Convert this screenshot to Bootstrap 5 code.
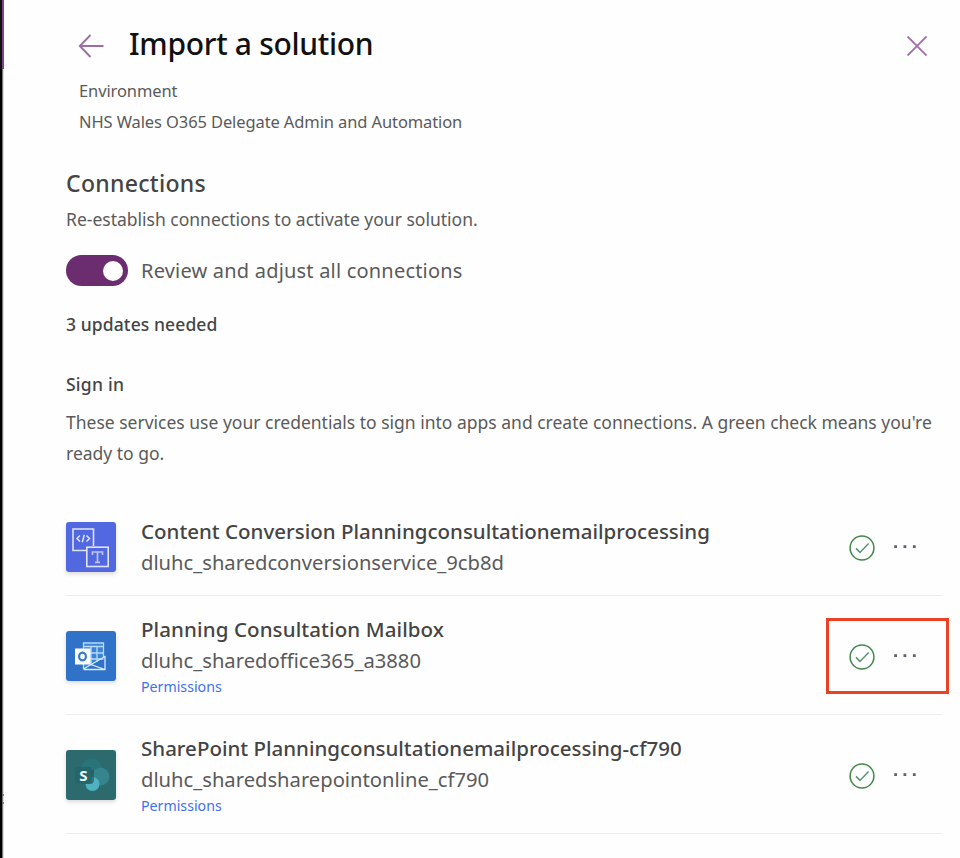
<!DOCTYPE html>
<html lang="en">
<head>
<meta charset="utf-8">
<meta name="viewport" content="width=device-width, initial-scale=1">
<title>Import a solution</title>
<link href="https://cdn.jsdelivr.net/npm/bootstrap@5.3.0/dist/css/bootstrap.min.css" rel="stylesheet">
<style>
body{font-family:"Noto Sans","Open Sans",sans-serif;background:#fefefe;color:#5a5a5a}
.panel-page{height:858px;overflow:hidden}
.edge{width:4px;background:linear-gradient(90deg,#000 0 2px,#777 2px 3px,#ddd 3px)}
.edge-top{height:69px;background:linear-gradient(90deg,#111 0 2px,#7d4585 2px 4px)}
.edge-ticks{margin-bottom:54px}
.edge-tick{width:4px;height:2px;background:linear-gradient(90deg,#000 0 2px,#777 2px)}
.edge-tick + .edge-tick{margin-top:6px}
.pane{padding:24px 18px 0 62px}
.back-icon{margin:4px 25px 0 12px}
.close-icon{margin:4px 15px 0 0}
.ttl{font-size:30px;line-height:40px;font-weight:500;color:#111;letter-spacing:-.3px;height:40px}
.env{padding:11px 0 0 13px;font-size:16.5px;line-height:31px;letter-spacing:-.11px}
.section-title{font-size:23px;line-height:30px;letter-spacing:.3px;margin-top:31px}
.body-text{font-size:17.5px;line-height:31px}
.strong-text{font-weight:500;color:#444}
.intro{margin:6px 0 0}
.toggle-row{margin-top:20px}
.toggle-on{width:62px;height:31px;background:#6c2c70;padding-right:5px}
.knob{width:20px;height:20px}
.toggle-label{margin-left:13px;font-size:20px;line-height:31px;letter-spacing:.2px}
.updates{margin-top:23px;letter-spacing:.1px}
.signin{margin-top:29px;letter-spacing:.25px}
.signin-note{margin:7px 0 0}
.services{margin-top:29px}
.svc{padding:18px 0 17px;border-bottom:1px solid #ededed}
.tile{width:50px;height:50px;border-radius:3px;box-shadow:0 2px 4px rgba(0,0,0,.15);margin-right:25px}
.svc-name{font-size:20.5px;line-height:31px}
.svc-name.spaced{letter-spacing:.11px}
.svc-id{font-size:20.2px;line-height:31px}
.perm{font-size:14.2px;line-height:22px;height:21px}
.perm a{color:#4070f6}
.actions{padding-right:25px;gap:18px}
.check-icon{margin-top:2px}
.callout{left:-23px;top:-24px;width:123px;height:76px;border:3px solid #ea4225}
</style>
</head>
<body>
<svg class="d-none">
  <symbol id="check" viewBox="0 0 26 26"><circle cx="13" cy="13" r="11.9" fill="none" stroke="#438848" stroke-width="1.5"/><path d="M7 13.400l4 4 8.600-8.800" fill="none" stroke="#5b9472" stroke-width="1.500"/></symbol>
  <symbol id="more" viewBox="0 0 24 6"><path d="M1.200 1.300h2.800v2.800H1.200zM10.500 1.300h2.800v2.800h-2.800zM19.900 1.300h2.800v2.800h-2.800z" fill="#625d70"/></symbol>
</svg>
<div class="panel-page d-flex">
  <div class="edge flex-shrink-0 d-flex flex-column justify-content-between">
    <div class="edge-top"></div>
    <div class="edge-ticks"><div class="edge-tick"></div><div class="edge-tick"></div></div>
  </div>
  <main class="pane flex-grow-1">
    <header class="d-flex align-items-center">
      <svg class="back-icon" width="26" height="24" viewBox="0 0 26 24" fill="none" stroke="#a06ca8" stroke-width="1.900"><path d="M25.500 12H2M12.500 1L1.800 12l10.700 11"/></svg>
      <h1 class="ttl mb-0">Import a solution</h1>
      <svg class="close-icon ms-auto" width="20" height="20" viewBox="0 0 20 20" fill="none" stroke="#a06ca8" stroke-width="1.800"><path d="M.5.5l19 19M19.500.5l-19 19"/></svg>
    </header>
    <div class="env">
      <div>Environment</div>
      <div>NHS Wales O365 Delegate Admin and Automation</div>
    </div>
    <h2 class="section-title strong-text mb-0">Connections</h2>
    <p class="body-text intro">Re-establish connections to activate your solution.</p>
    <div class="toggle-row d-flex align-items-center">
      <div class="toggle-on rounded-pill d-flex align-items-center justify-content-end" role="switch" aria-checked="true"><div class="knob rounded-circle bg-white"></div></div>
      <div class="toggle-label">Review and adjust all connections</div>
    </div>
    <div class="body-text strong-text updates">3 updates needed</div>
    <div class="body-text strong-text signin">Sign in</div>
    <p class="body-text signin-note">These services use your credentials to sign into apps and create connections. A green check means you're<br>ready to go.</p>

    <div class="services">
      <div class="svc d-flex align-items-center">
        <svg class="tile flex-shrink-0" viewBox="0 0 50 50"><rect width="50" height="50" fill="#5168e0"/>
          <g fill="none" stroke="#dfe4fb" stroke-width="1.600"><path d="M20 28.500H7V7h20.500v17"/><rect x="20.800" y="25.200" width="21.400" height="19.300"/></g>
          <g fill="none" stroke="#dfe4fb" stroke-width="1.500"><path d="M14 13.500l-3 3 3 3M20.500 13.500l3 3-3 3M18.300 12.700l-2 7.600"/></g>
          <path d="M26.500 33v-3h10v3M31.500 30v10.300M29 40.300h5" fill="none" stroke="#bac4f5" stroke-width="1.700"/></svg>
        <div class="flex-grow-1">
          <div class="svc-name strong-text">Content Conversion Planningconsultationemailprocessing</div>
          <div class="svc-id">dluhc_sharedconversionservice_9cb8d</div>
        </div>
        <div class="actions d-flex align-items-center">
          <svg class="check-icon" width="26" height="26"><use href="#check"/></svg>
          <svg width="24" height="6"><use href="#more"/></svg>
        </div>
      </div>

      <div class="svc d-flex align-items-center">
        <svg class="tile flex-shrink-0" viewBox="0 0 50 50"><rect width="50" height="50" fill="#2f72c8"/>
          <path d="M17.500 12h20v15.500l-20 10z" fill="#3e83d6"/>
          <g fill="none" stroke="#b5dcfa" stroke-width="1.300"><path d="M17.500 38V12H37.500v14M17.500 15.500h20M25 15.500V34M31 15.500V31M17.500 22h20M17.500 28h20"/><path d="M17.500 38.500H39V25.500L25 33.500l14 5M25 33.500l-7.500 4.500" stroke="#d5ecfd"/></g>
          <rect x="9" y="17.500" width="15.500" height="16" fill="#fff"/>
          <ellipse cx="16.500" cy="25.500" rx="3.400" ry="3.900" fill="none" stroke="#397bc9" stroke-width="2.200"/></svg>
        <div class="flex-grow-1">
          <div class="svc-name strong-text spaced">Planning Consultation Mailbox</div>
          <div class="svc-id">dluhc_sharedoffice365_a3880</div>
          <div class="perm"><a class="text-decoration-none" href="#">Permissions</a></div>
        </div>
        <div class="actions d-flex align-items-center position-relative">
          <svg class="check-icon" width="26" height="26"><use href="#check"/></svg>
          <svg width="24" height="6"><use href="#more"/></svg>
          <div class="callout position-absolute"></div>
        </div>
      </div>

      <div class="svc d-flex align-items-center">
        <svg class="tile flex-shrink-0" viewBox="0 0 50 50"><rect width="50" height="50" fill="#2c6a6e"/>
          <circle cx="25.500" cy="18" r="9.800" fill="#297479"/><circle cx="34.500" cy="26.500" r="9" fill="#36858c"/><circle cx="26.500" cy="34" r="7" fill="#50b2c1"/>
          <path d="M19 20h9v10a4 4 0 0 1-4 4h-5z" fill="#1c555a" opacity=".65"/>
          <rect x="9" y="17" width="16.500" height="16.500" rx="1.500" fill="#24666c"/>
          <text x="17.300" y="31" font-size="15" font-weight="700" text-anchor="middle" fill="#eef8f8">S</text></svg>
        <div class="flex-grow-1">
          <div class="svc-name strong-text">SharePoint Planningconsultationemailprocessing-cf790</div>
          <div class="svc-id">dluhc_sharedsharepointonline_cf790</div>
          <div class="perm"><a class="text-decoration-none" href="#">Permissions</a></div>
        </div>
        <div class="actions d-flex align-items-center">
          <svg class="check-icon" width="26" height="26"><use href="#check"/></svg>
          <svg width="24" height="6"><use href="#more"/></svg>
        </div>
      </div>
    </div>
  </main>
</div>
<script src="https://cdn.jsdelivr.net/npm/bootstrap@5.3.0/dist/js/bootstrap.bundle.min.js"></script>
</body>
</html>
